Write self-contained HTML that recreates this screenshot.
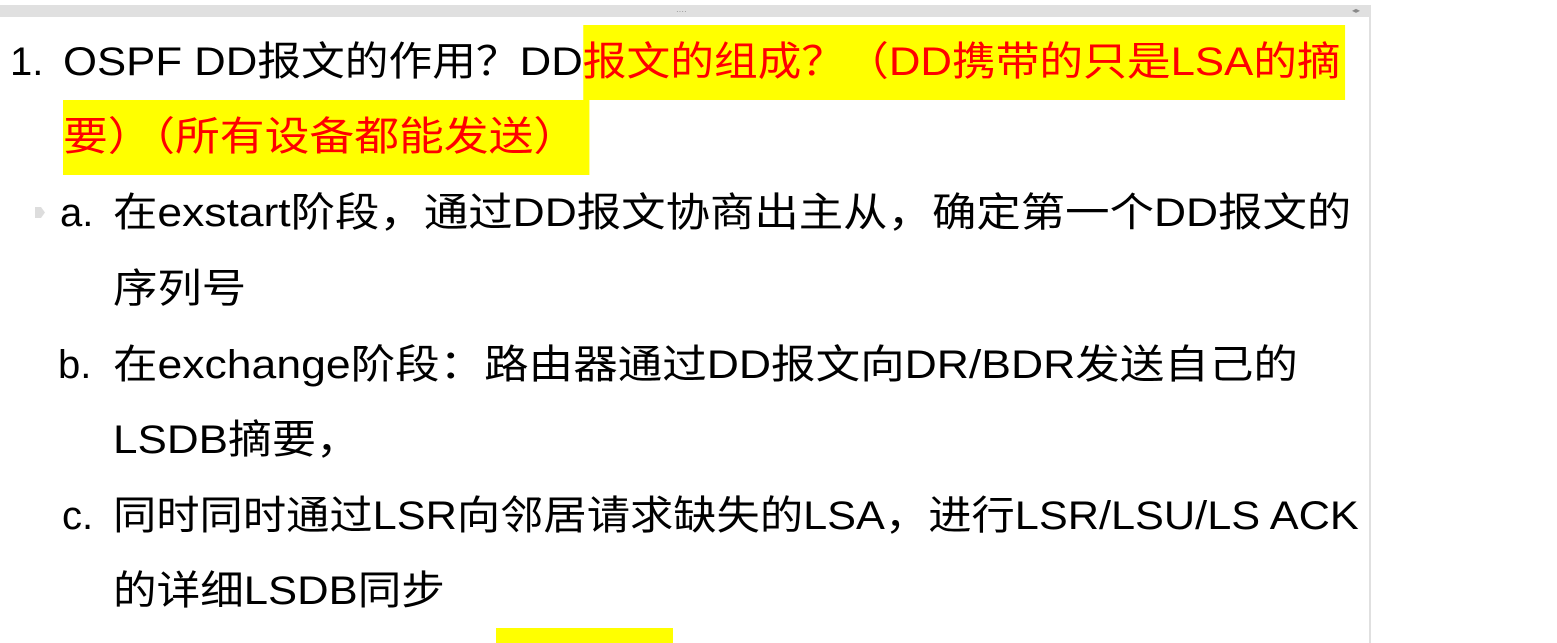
<!DOCTYPE html>
<html><head><meta charset="utf-8"><style>
body{margin:0;width:1557px;height:643px;background:#fff;overflow:hidden;position:relative;font-family:"Liberation Sans","Noto Sans CJK SC",sans-serif;}
.bar{position:absolute;left:0;top:5px;width:1370px;height:12px;background:#e0e0e0;}
.border{position:absolute;left:1369px;top:5px;width:2px;height:638px;background:#e0e0e0;}
.l{position:absolute;font-size:40px;line-height:75px;height:75px;white-space:nowrap;color:#000;transform-origin:0 0;}
.hl{background:#ff0;color:#f00;display:inline-block;}
</style></head><body>
<div class="bar"></div>
<div style="position:absolute;left:676px;top:9px;font-size:8px;color:#888;line-height:6px">····</div>
<div style="position:absolute;left:1352px;top:6px;font-size:8px;color:#888">◂▸</div>
<div class="border"></div>
<div class="l" style="left:10px;top:25px">1.</div>
<div class="l" style="left:63px;top:25px;transform:scaleX(1.093)">OSPF DD报文的作用？DD<span class="hl" style="padding-right:4px">报文的组成？（DD携带的只是LSA的摘</span></div>
<div class="l" style="left:63px;top:100px;transform:scaleX(1.12)"><span class="hl" style="padding-right:10px">要）（所有设备都能发送）</span></div>
<div style="position:absolute;left:35px;top:207px;width:10px;height:11px;background:#ddd;clip-path:polygon(0 0,60% 0,100% 50%,60% 100%,0 100%)"></div>
<div class="l" style="left:60px;top:176px">a.</div>
<div class="l" style="left:113px;top:176px;transform:scaleX(1.11)">在exstart阶段，通过DD报文协商出主从，确定第一个DD报文的</div>
<div class="l" style="left:113px;top:252px;transform:scaleX(1.11)">序列号</div>
<div class="l" style="left:58px;top:328px">b.</div>
<div class="l" style="left:113px;top:328px;transform:scaleX(1.113)">在exchange阶段：路由器通过DD报文向DR/BDR发送自己的</div>
<div class="l" style="left:113px;top:403px;transform:scaleX(1.1)">LSDB摘要，</div>
<div class="l" style="left:62px;top:479px">c.</div>
<div class="l" style="left:113px;top:479px;transform:scaleX(1.082)">同时同时通过LSR向邻居请求缺失的LSA，进行LSR/LSU/LS ACK</div>
<div class="l" style="left:113px;top:554px;transform:scaleX(1.09)">的详细LSDB同步</div>
<div style="position:absolute;left:496px;top:628px;width:177px;height:15px;background:#ff0"></div>
</body></html>
